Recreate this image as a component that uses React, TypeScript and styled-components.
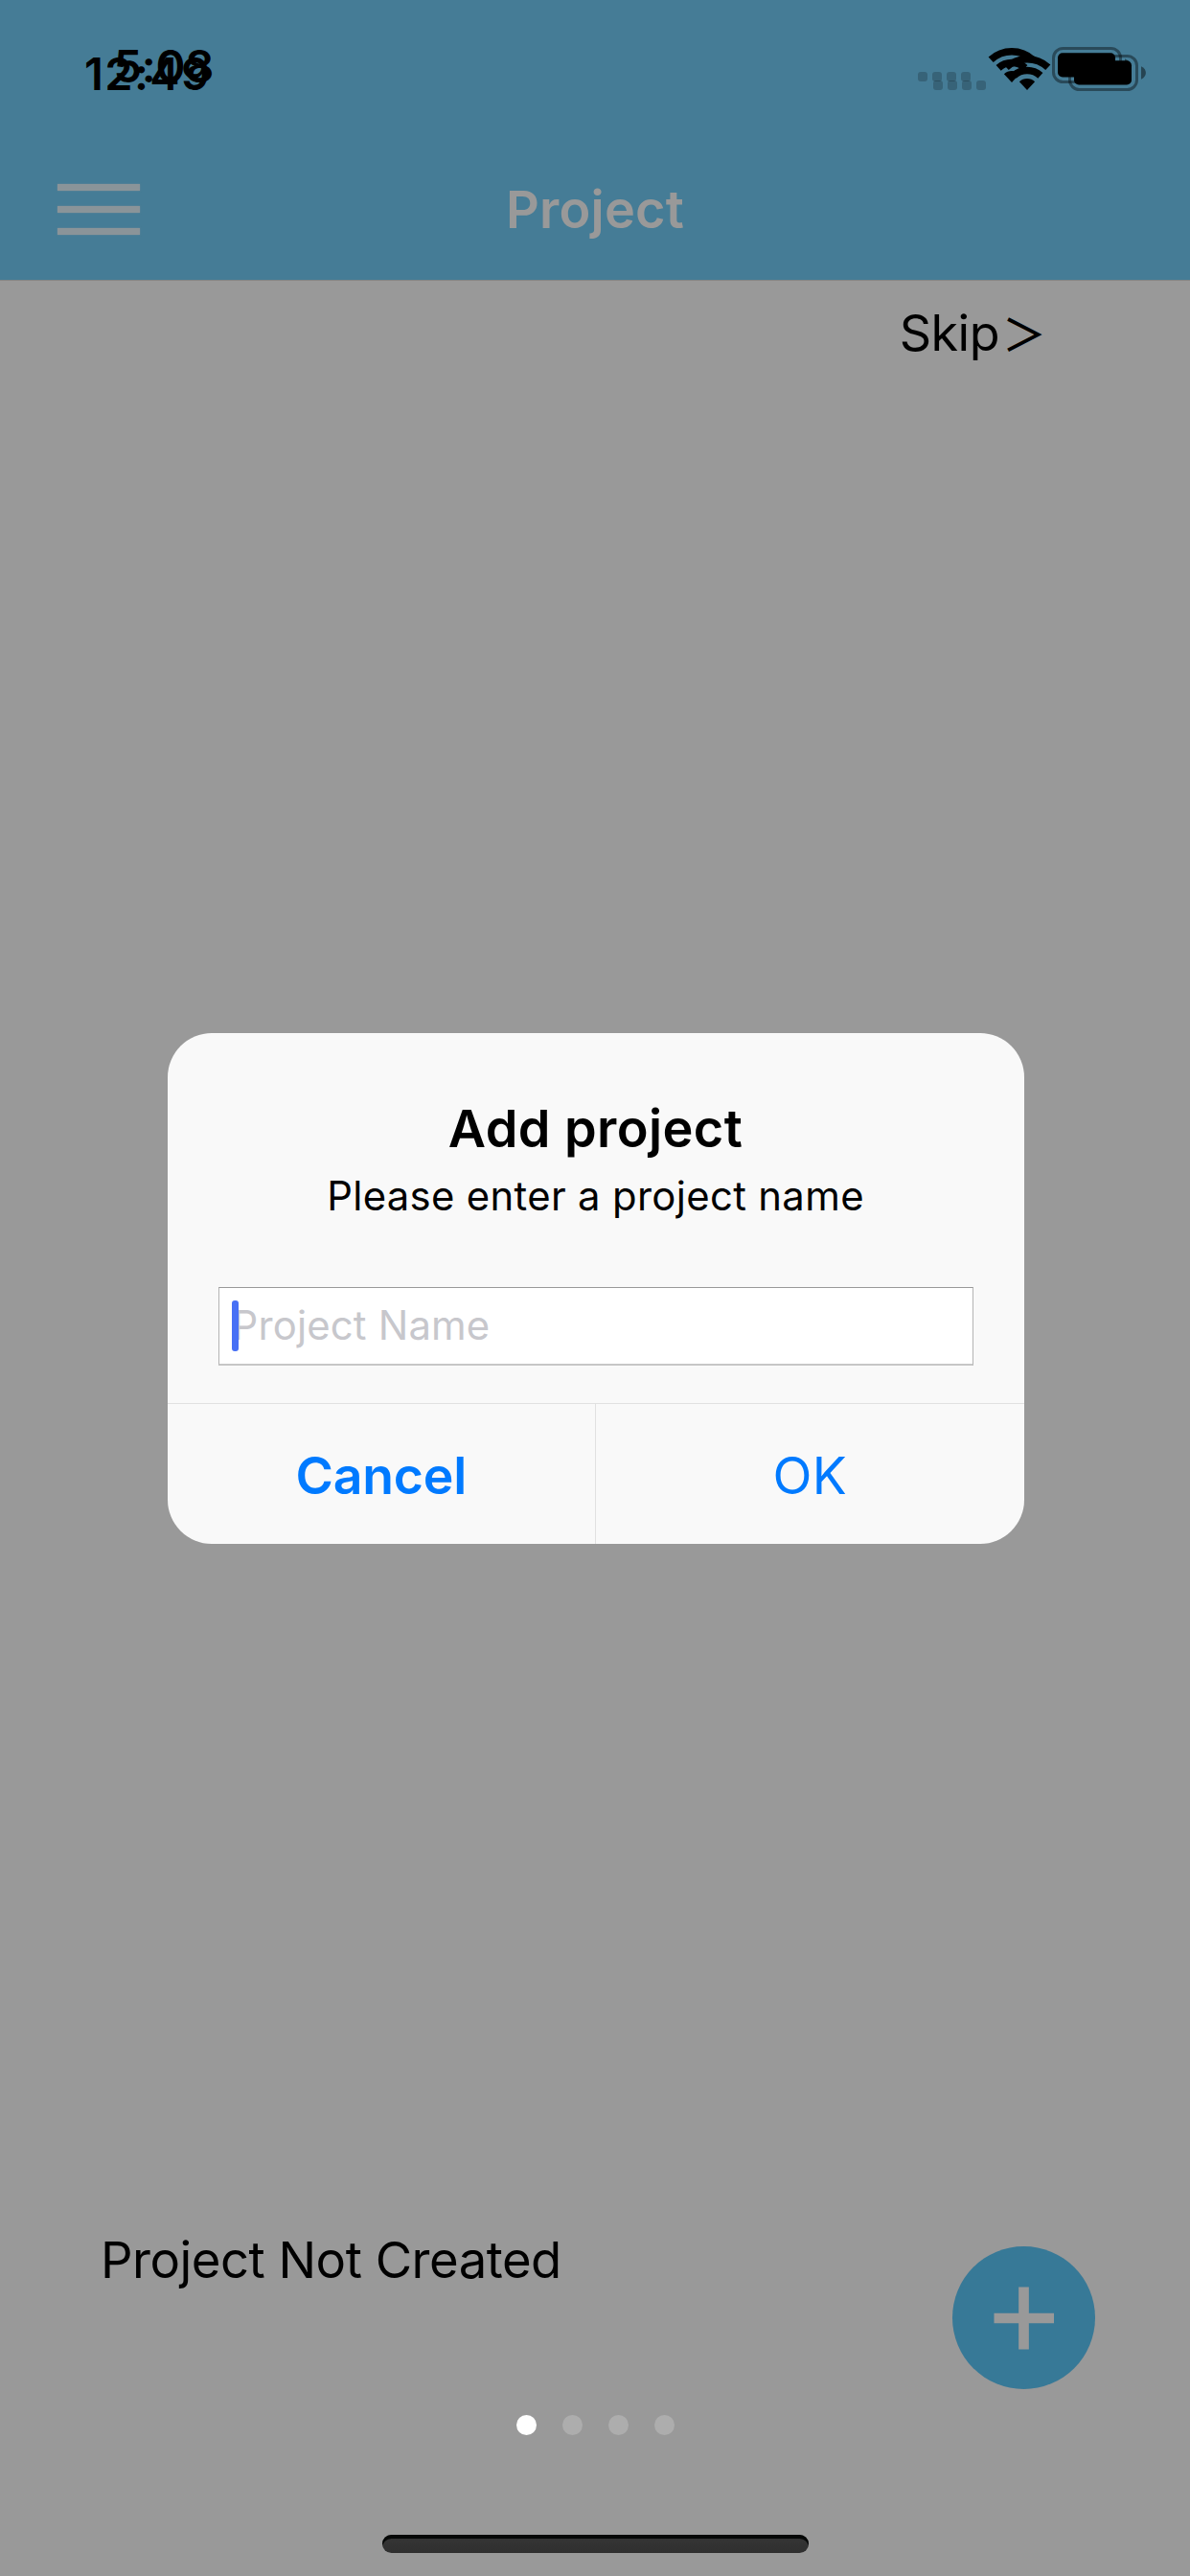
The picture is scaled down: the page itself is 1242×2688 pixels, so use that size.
import * as React from "react";
import styled, { createGlobalStyle } from "styled-components";

const DOTS = [0, 1, 2, 3];

function Wifi() {
  return (
    <svg width="50" height="38" viewBox="0 0 50 38" fill="none">
      <path
        d="M3.2 13.3 A32.2 32.2 0 0 1 46.8 13.3"
        stroke="#000"
        strokeWidth="7.6"
      />
      <path
        d="M11.15 21.9 A20.5 20.5 0 0 1 38.85 21.9"
        stroke="#000"
        strokeWidth="7.6"
      />
      <path d="M25 37 L16.9 28.2 A12 12 0 0 1 33.1 28.2 Z" fill="#000" />
    </svg>
  );
}

function Battery() {
  return (
    <svg width="82" height="38" viewBox="0 0 82 38" fill="none">
      <rect
        x="1.5"
        y="1.5"
        width="70"
        height="35"
        rx="10"
        stroke="#000"
        strokeOpacity="0.4"
        strokeWidth="3"
      />
      <rect x="6" y="6.3" width="60" height="25.2" rx="5" fill="#000" />
      <path d="M76 12.3 C82.5 15 82.5 23 76 25.7 Z" fill="#000" fillOpacity="0.45" />
    </svg>
  );
}

function Signal() {
  return (
    <SignalRow>
      {DOTS.map((i) => (
        <SignalDot key={i} />
      ))}
    </SignalRow>
  );
}

export default function App() {
  return (
    <Screen>
      <GlobalStyle />
      <Header>
        <StatusBar>
          <Overlay $left={88} $top={48}>
            <Clock $spacing={1.4}>12:49</Clock>
          </Overlay>
          <Overlay $left={118.5} $top={40}>
            <Clock $spacing={-0.3}>5:08</Clock>
          </Overlay>
          <Overlay $left={958} $top={75}>
            <Signal />
          </Overlay>
          <Overlay $left={974} $top={84}>
            <Signal />
          </Overlay>
          <Overlay $left={1030.5} $top={48.5}>
            <Wifi />
          </Overlay>
          <Overlay $left={1047} $top={57}>
            <Wifi />
          </Overlay>
          <Overlay $left={1098} $top={49}>
            <Battery />
          </Overlay>
          <Overlay $left={1114.5} $top={57.3}>
            <Battery />
          </Overlay>
        </StatusBar>
        <NavBar>
          <MenuButton aria-label="Menu">
            <MenuLine />
            <MenuLine />
            <MenuLine />
          </MenuButton>
          <NavTitle>Project</NavTitle>
        </NavBar>
      </Header>

      <Main>
        <Skip>
          Skip<Chevron>＞</Chevron>
        </Skip>
        <Footer>
          <EmptyText>Project Not Created</EmptyText>
          <AddButton aria-label="Add project">
            <svg width="64" height="66" viewBox="0 0 64 66">
              <path d="M31.5 0.5 V65.5 M0.5 33 H63" stroke="#999" strokeWidth="10.7" />
            </svg>
          </AddButton>
        </Footer>
        <Pager>
          {DOTS.map((i) => (
            <PageDot key={i} $active={i === 0} />
          ))}
        </Pager>
        <HomeIndicator />
      </Main>

      <Dialog role="dialog">
        <DialogTitle>Add project</DialogTitle>
        <DialogMessage>Please enter a project name</DialogMessage>
        <Field>
          <FieldInput placeholder="Project Name" />
          <Caret />
        </Field>
        <Actions>
          <Action $bold>Cancel</Action>
          <Action>OK</Action>
        </Actions>
      </Dialog>
    </Screen>
  );
}

const GlobalStyle = createGlobalStyle`
  * {
    box-sizing: border-box;
  }
  body {
    margin: 0;
    background: #999;
    font-family: Inter, "Noto Sans CJK SC", sans-serif;
  }
  button, input {
    font-family: inherit;
    border: 0;
    padding: 0;
    background: none;
  }
`;

const Screen = styled.div`
  position: relative;
  display: flex;
  flex-direction: column;
  width: 1242px;
  height: 2688px;
  background: #999;
  color: #000;
  overflow: hidden;
`;

const Header = styled.header`
  height: 293px;
  background: #457c96;
  border-bottom: 1px solid #858585;
`;

const StatusBar = styled.div`
  position: relative;
  height: 146px;
`;

/* two status bars are drawn one over the other */
const Overlay = styled.div<{ $left: number; $top: number }>`
  position: absolute;
  left: ${(p) => p.$left}px;
  top: ${(p) => p.$top}px;
  line-height: 0;
`;

const Clock = styled.span<{ $spacing: number }>`
  font-size: 47px;
  font-weight: 600;
  line-height: 57px;
  letter-spacing: ${(p) => p.$spacing}px;
`;

const SignalRow = styled.div`
  display: flex;
  gap: 5px;
`;

const SignalDot = styled.div`
  width: 10px;
  height: 10px;
  border-radius: 3px;
  background: rgba(0, 0, 0, 0.2);
`;

const NavBar = styled.div`
  display: grid;
  grid-template-columns: 1fr auto 1fr;
  align-items: center;
  height: 145px;
  padding: 0 60px;
`;

const MenuButton = styled.button`
  display: flex;
  flex-direction: column;
  gap: 16px;
  width: 86px;
`;

const MenuLine = styled.span`
  height: 7px;
  background: #8a9499;
  box-shadow: 0 0 2px rgba(138, 148, 153, 0.6);
`;

const NavTitle = styled.h1`
  margin: 0;
  color: #999;
  font-size: 54px;
  font-weight: 600;
  line-height: 64px;
  letter-spacing: 0.2px;
`;

const Main = styled.main`
  flex: 1;
  display: flex;
  flex-direction: column;
`;

const Skip = styled.div`
  display: flex;
  align-self: flex-end;
  margin: 23px 145px 0 0;
  font-size: 52px;
  line-height: 64px;
  letter-spacing: -0.5px;
`;

const Chevron = styled.span`
  width: 54px;
  padding-left: 3px;
  font-family: "Noto Sans CJK SC", sans-serif;
  font-size: 46px;
  font-weight: 500;
  line-height: 60px;
`;

const Footer = styled.div`
  display: flex;
  justify-content: space-between;
  margin-top: auto;
  padding: 0 99px 0 105px;
`;

const EmptyText = styled.p`
  margin: -18px 0 0;
  font-size: 52.6px;
  line-height: 64px;
  letter-spacing: -0.5px;
`;

const AddButton = styled.button`
  display: flex;
  align-items: center;
  justify-content: center;
  width: 149px;
  height: 149px;
  border-radius: 50%;
  background: #377997;
`;

const Pager = styled.div`
  display: flex;
  justify-content: center;
  gap: 27px;
  margin: 27px 0 104px;
`;

const PageDot = styled.div<{ $active: boolean }>`
  width: 21px;
  height: 21px;
  border-radius: 50%;
  background: ${(p) => (p.$active ? "#fff" : "#adadad")};
`;

const HomeIndicator = styled.div`
  align-self: center;
  width: 445px;
  height: 19px;
  margin-bottom: 24px;
  border-radius: 10px;
  background: linear-gradient(#363636, #2f2f2f);
  box-shadow: inset 0 4px 0 #060807;
`;

const Dialog = styled.div`
  position: absolute;
  top: 1078px;
  left: 174.5px;
  display: flex;
  flex-direction: column;
  width: 894px;
  height: 533px;
  padding-top: 70px;
  border-radius: 46px;
  background: #f9f9f9;
  text-align: center;
  overflow: hidden;
`;

const DialogTitle = styled.h2`
  margin: 0;
  font-size: 54px;
  font-weight: 600;
  line-height: 60px;
  letter-spacing: 0.4px;
`;

const DialogMessage = styled.p`
  margin: 15px 0 70px;
  font-size: 41.8px;
  line-height: 50px;
  letter-spacing: 0.35px;
`;

const Field = styled.div`
  position: relative;
  height: 82px;
  margin: 0 53px;
  border: 1px solid #b4b4b4;
  border-width: 1px 1px 2px;
  border-color: #999 #b4b4b4 #c6c6c6;
  background: #fff;
`;

const FieldInput = styled.input`
  display: block;
  width: 100%;
  height: 77px;
  padding-left: 14px;
  font-size: 41.8px;
  letter-spacing: 0.2px;

  &::placeholder {
    color: #c7c7cc;
    opacity: 1;
  }
`;

const Caret = styled.span`
  position: absolute;
  left: 13px;
  top: 13px;
  width: 7px;
  height: 53px;
  border-radius: 3px;
  background: #4770f5;
`;

const Actions = styled.div`
  display: flex;
  height: 147px;
  margin-top: auto;
  border-top: 1px solid #e1e1e1;
`;

const Action = styled.button<{ $bold?: boolean }>`
  flex: 1;
  padding-top: 2px;
  color: #007aff;
  font-size: 53.5px;
  font-weight: ${(p) => (p.$bold ? 600 : 400)};
  letter-spacing: ${(p) => (p.$bold ? -0.2 : 0.3)}px;

  & + & {
    border-left: 1px solid #e1e1e1;
  }
`;
